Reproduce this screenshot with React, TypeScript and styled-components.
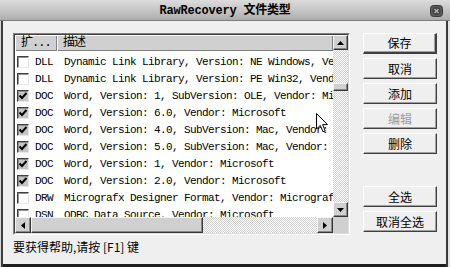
import styled, { createGlobalStyle } from "styled-components";

interface FileType {
  ext: string;
  desc: string;
  checked: boolean;
}

const fileTypes: FileType[] = [
  { ext: "DLL", desc: "Dynamic Link Library, Version: NE Windows, Vendor: Microsoft", checked: false },
  { ext: "DLL", desc: "Dynamic Link Library, Version: PE Win32, Vendor: Microsoft", checked: false },
  { ext: "DOC", desc: "Word, Version: 1, SubVersion: OLE, Vendor: Microsoft", checked: true },
  { ext: "DOC", desc: "Word, Version: 6.0, Vendor: Microsoft", checked: true },
  { ext: "DOC", desc: "Word, Version: 4.0, SubVersion: Mac, Vendor: Microsoft", checked: true },
  { ext: "DOC", desc: "Word, Version: 5.0, SubVersion: Mac, Vendor: Microsoft", checked: true },
  { ext: "DOC", desc: "Word, Version: 1, Vendor: Microsoft", checked: true },
  { ext: "DOC", desc: "Word, Version: 2.0, Vendor: Microsoft", checked: true },
  { ext: "DRW", desc: "Micrografx Designer Format, Vendor: Micrografx", checked: false },
  { ext: "DSN", desc: "ODBC Data Source, Vendor: Microsoft", checked: false },
];

function App() {
  return (
    <>
      <GlobalStyle />
      <Window>
        <TitleBar>
          <span />
          <Title>RawRecovery 文件类型</Title>
          <CloseButton>
            <svg width="13" height="12" viewBox="0 0 13 12">
              <rect x="0.5" y="0.5" width="12" height="11" rx="3" fill="#5a5a5a" stroke="#3a3a3a" />
              <circle cx="6.5" cy="6" r="4" fill="#444" />
              <path d="M4.5 4 L8.5 8 M8.5 4 L4.5 8" stroke="#b8b8b8" strokeWidth="1.3" />
            </svg>
          </CloseButton>
        </TitleBar>

        <Body>
          <LeftColumn>
            <ListView>
              <ListInner>
                <ListContent>
                  <Header>
                    <HeaderCell $width={42}>扩...</HeaderCell>
                    <HeaderCell>描述</HeaderCell>
                  </Header>
                  <Rows>
                    {fileTypes.map((item, i) => (
                      <Row key={i}>
                        <CheckBox $checked={item.checked}>
                          {item.checked && (
                            <svg width="10" height="10" viewBox="0 0 10 10">
                              <path d="M1.5 4.5 L4 7 L8.5 2" fill="none" stroke="#000" strokeWidth="2" />
                            </svg>
                          )}
                        </CheckBox>
                        <Ext>{item.ext}</Ext>
                        <Desc>{item.desc}</Desc>
                      </Row>
                    ))}
                  </Rows>
                </ListContent>

                <VScroll>
                  <ScrollButton>
                    <svg width="7" height="4" viewBox="0 0 7 4">
                      <path d="M3.5 0 L7 4 L0 4 Z" fill="#000" />
                    </svg>
                  </ScrollButton>
                  <Track $vertical>
                    <VThumb />
                  </Track>
                  <ScrollButton>
                    <svg width="7" height="4" viewBox="0 0 7 4">
                      <path d="M0 0 L7 0 L3.5 4 Z" fill="#000" />
                    </svg>
                  </ScrollButton>
                </VScroll>

                <HScroll>
                  <ScrollButton $wide>
                    <svg width="4" height="7" viewBox="0 0 4 7">
                      <path d="M4 0 L4 7 L0 3.5 Z" fill="#000" />
                    </svg>
                  </ScrollButton>
                  <Track>
                    <HThumb />
                  </Track>
                  <ScrollButton $wide>
                    <svg width="4" height="7" viewBox="0 0 4 7">
                      <path d="M0 0 L4 3.5 L0 7 Z" fill="#000" />
                    </svg>
                  </ScrollButton>
                </HScroll>
                <Corner />
              </ListInner>
            </ListView>
            <StatusText>要获得帮助,请按 [F1] 键</StatusText>
          </LeftColumn>

          <ButtonColumn>
            <DialogButton $primary>保存</DialogButton>
            <DialogButton>取消</DialogButton>
            <DialogButton>添加</DialogButton>
            <DialogButton disabled>编辑</DialogButton>
            <DialogButton>删除</DialogButton>
            <Spacer />
            <DialogButton>全选</DialogButton>
            <DialogButton>取消全选</DialogButton>
          </ButtonColumn>
        </Body>

        <Cursor width="12" height="20" viewBox="0 0 12 20">
          <path
            d="M0.5 0.5 L0.5 16 L4.3 12.4 L7 18.8 L9.2 17.9 L6.6 11.6 L11.5 11.6 Z"
            fill="#fff"
            stroke="#000"
            strokeWidth="1"
          />
        </Cursor>
      </Window>
    </>
  );
}

export default App;

const GlobalStyle = createGlobalStyle`
  html, body {
    margin: 0;
    padding: 0;
    background: #efefef;
  }

  body {
    font-family: "Noto Sans CJK SC", sans-serif;
  }
`;

const Window = styled.div`
  position: relative;
  display: flex;
  flex-direction: column;
  width: 450px;
  height: 267px;
  overflow: hidden;
  background: #efefef;
  box-shadow: inset 1px 0 0 #d8d8d8, inset 3px 0 0 #3c3c3c,
    inset -2px 0 0 #e4e4e4, inset -4px 0 0 #3a3a3a, inset 0 -3px 0 #1e1e1e;
`;

const TitleBar = styled.div`
  box-sizing: border-box;
  display: grid;
  grid-template-columns: 1fr auto 1fr;
  align-items: center;
  height: 21px;
  padding-top: 2px;
  background: linear-gradient(#dcdcdc, #c4c4c4 55%, #acacac);
  border-bottom: 1px solid #7c7c7c;
`;

const Title = styled.div`
  font-family: "Liberation Mono", "Noto Sans CJK SC", monospace;
  font-size: 12px;
  font-weight: bold;
  letter-spacing: -0.2px;
  line-height: 14px;
  color: #000;
`;

const CloseButton = styled.div`
  display: flex;
  justify-self: end;
  margin-right: 7px;
`;

const Body = styled.div`
  display: flex;
  gap: 13px;
  padding: 12px 0 0 13px;
`;

const LeftColumn = styled.div`
  display: flex;
  flex-direction: column;
  width: 337px;
`;

const ListView = styled.div`
  box-sizing: border-box;
  height: 202px;
  border: 1px solid;
  border-color: #808080 #ffffff #ffffff #808080;
`;

const ListInner = styled.div`
  box-sizing: border-box;
  display: grid;
  grid-template-columns: 318px 15px;
  grid-template-rows: 182px 16px;
  height: 100%;
  background: #fff;
  border: 1px solid;
  border-color: #404040 #dcdcdc #dcdcdc #404040;
`;

const ListContent = styled.div`
  overflow: hidden;
`;

const Header = styled.div`
  display: flex;
  height: 16px;
  background: #d0d0d0;
`;

const HeaderCell = styled.div<{ $width?: number }>`
  box-sizing: border-box;
  flex: ${(p) => (p.$width ? `0 0 ${p.$width}px` : "1")};
  padding-left: 6px;
  font-family: "Liberation Mono", "Noto Sans CJK SC", monospace;
  font-size: 12px;
  letter-spacing: -1px;
  line-height: 16px;
  color: #000;
  box-shadow: inset 1px 1px 0 #fff, inset -1px -1px 0 #808080;
  white-space: nowrap;
`;

const Rows = styled.div`
  padding-top: 2px;
`;

const Row = styled.div`
  display: flex;
  align-items: center;
  height: 17px;
  white-space: nowrap;
  font-family: "Liberation Mono", monospace;
  font-size: 11px;
  letter-spacing: -0.6px;
  color: #000;
`;

const CheckBox = styled.div<{ $checked: boolean }>`
  box-sizing: border-box;
  display: flex;
  align-items: center;
  justify-content: center;
  flex: 0 0 12px;
  height: 12px;
  margin-left: 2px;
  background: ${(p) => (p.$checked ? "#c4c4c4" : "#ffffff")};
  border: 1px solid;
  border-color: #404040 #e8e8e8 #e8e8e8 #404040;
  box-shadow: inset 1px 1px 0 #909090;
`;

const Ext = styled.span`
  flex: 0 0 29px;
  margin-left: 6px;
`;

const Desc = styled.span``;

const VScroll = styled.div`
  display: flex;
  flex-direction: column;
`;

const HScroll = styled.div`
  display: flex;
`;

const ScrollButton = styled.div<{ $wide?: boolean }>`
  box-sizing: border-box;
  display: flex;
  align-items: center;
  justify-content: center;
  flex: 0 0 ${(p) => (p.$wide ? "16px" : "15px")};
  background: #d0d0d0;
  border: 1px solid;
  border-color: #f4f4f4 #383838 #383838 #f4f4f4;
  box-shadow: inset -1px -1px 0 #888;
`;

const Track = styled.div<{ $vertical?: boolean }>`
  display: flex;
  flex-direction: ${(p) => (p.$vertical ? "column" : "row")};
  flex: 1;
  background: repeating-conic-gradient(#ffffff 0 25%, #cfcfcf 0 50%) 0 0 / 2px 2px;
`;

const Thumb = styled.div`
  box-sizing: border-box;
  background: #d0d0d0;
  border: 1px solid;
  border-color: #f4f4f4 #383838 #383838 #f4f4f4;
  box-shadow: inset -1px -1px 0 #888;
`;

const VThumb = styled(Thumb)`
  height: 8px;
  margin-top: 33px;
`;

const HThumb = styled(Thumb)`
  width: 172px;
`;

const Corner = styled.div`
  background: #d0d0d0;
`;

const StatusText = styled.div`
  margin-top: 6px;
  font-size: 12px;
  line-height: 12px;
  color: #000;
  white-space: nowrap;
`;

const ButtonColumn = styled.div`
  display: flex;
  flex-direction: column;
  gap: 4px;
  width: 74px;
`;

const Spacer = styled.div`
  height: 24px;
`;

const DialogButton = styled.button<{ $primary?: boolean }>`
  box-sizing: border-box;
  display: flex;
  align-items: center;
  justify-content: center;
  width: 74px;
  height: 21px;
  padding: 0;
  overflow: hidden;
  background: #efefef;
  border: 1px solid;
  border-color: #ffffff #404040 #404040 #ffffff;
  border-right-width: ${(p) => (p.$primary ? "2px" : "1px")};
  border-bottom-width: ${(p) => (p.$primary ? "2px" : "1px")};
  box-shadow: inset -1px -1px 0 #a0a0a0;
  font-family: "Noto Sans CJK SC", sans-serif;
  font-size: 12px;
  line-height: 16px;
  color: #000;

  &:disabled {
    color: #9c9c9c;
  }
`;

const Cursor = styled.svg`
  position: absolute;
  left: 316px;
  top: 113px;
`;
